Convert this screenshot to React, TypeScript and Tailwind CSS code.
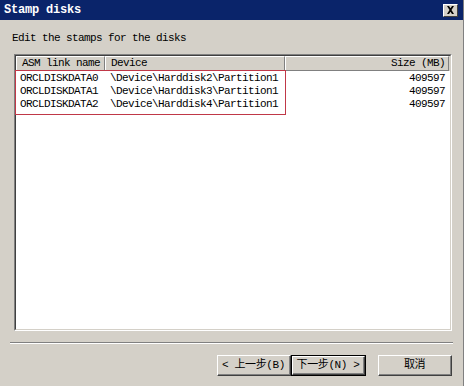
import React from "react";

const mono = { fontFamily: '"Liberation Mono", "Noto Sans CJK SC", monospace' };

const rows = [
  ["ORCLDISKDATA0", "\\Device\\Harddisk2\\Partition1", "409597"],
  ["ORCLDISKDATA1", "\\Device\\Harddisk3\\Partition1", "409597"],
  ["ORCLDISKDATA2", "\\Device\\Harddisk4\\Partition1", "409597"],
];

function Btn({ children, def }: { children: React.ReactNode; def?: boolean }) {
  return (
    <div className={def ? "border border-black" : ""}>
      <div className="border-t border-l border-t-white border-l-white border-b border-r border-b-[#404040] border-r-[#404040]">
        <div
          className={`border-b border-r border-b-[#808080] border-r-[#808080] flex items-center justify-center whitespace-nowrap text-[11px] tracking-[-0.4px] text-black ${def ? "w-[71px] h-[17px]" : "w-[72px] h-[19px]"}`}
          style={mono}
        >
          {children}
        </div>
      </div>
    </div>
  );
}

export default function App() {
  return (
    <div className="w-[464px] h-[386px] bg-[#d4d0c8] flex flex-col overflow-hidden border-r border-r-[#808080]" style={mono}>
      <div className="h-[20px] bg-[#0a246a] flex items-center justify-between pl-[4px] pr-[5px] shrink-0">
        <span className="text-white font-bold text-[12px] tracking-[-0.2px]" style={mono}>Stamp disks</span>
        <div className="w-[15px] h-[13px] bg-[#d4d0c8] border-t border-l border-white border-b border-r border-b-[#404040] border-r-[#404040] flex items-center justify-center">
          <svg width="9" height="8" viewBox="0 0 9 8">
            <path d="M1 0h2l1.5 2.2L6 0h2L5.5 4 8 8H6L4.5 5.8 3 8H1l2.5-4z" fill="#000" />
          </svg>
        </div>
      </div>
      <div className="pl-[12px] mt-[12px] text-[11px] leading-[13px] tracking-[-0.6px] text-black">
        Edit the stamps for the disks
      </div>
      <div className="relative ml-[14px] mt-[9px] w-[438px] h-[277px] border-t border-l border-t-[#808080] border-l-[#808080] border-b border-r border-b-white border-r-white">
        <div className="w-full h-full border-t border-l border-t-[#404040] border-l-[#404040] border-b border-r border-b-[#d4d0c8] border-r-[#d4d0c8] bg-white flex flex-col">
          <div className="flex h-[15px] text-[11px] leading-[13px] tracking-[-0.6px] text-black shrink-0">
            <div className="w-[89px] bg-[#d4d0c8] border-t border-l border-white border-b border-r border-b-[#808080] border-r-[#808080] pl-[5px]">ASM link name</div>
            <div className="w-[180px] bg-[#d4d0c8] border-t border-l border-white border-b border-r border-b-[#808080] border-r-[#808080] pl-[5px]">Device</div>
            <div className="w-[164px] bg-[#d4d0c8] border-t border-l border-white border-b border-r border-b-[#808080] border-r-[#808080] pr-[3px] text-right">Size (MB)</div>
            <div className="flex-1 bg-[#d4d0c8]" />
          </div>
          <div className="flex flex-col pt-[1px] text-[11px] tracking-[-0.6px] text-black">
            {rows.map((r) => (
              <div key={r[0]} className="flex h-[13px] leading-[13px]">
                <div className="w-[89px] pl-[4px]">{r[0]}</div>
                <div className="w-[180px] pl-[5px]">{r[1]}</div>
                <div className="w-[164px] pr-[4px] text-right">{r[2]}</div>
              </div>
            ))}
          </div>
        </div>
        <div className="absolute left-[0px] top-[15px] w-[271px] h-[45px] border-[1.5px] border-[#c03848]" />
      </div>
      <div className="mx-[10px] mt-[11px] border-t border-t-[#808080] border-b border-b-white" />
      <div className="flex mt-[11px] pl-[217px]">
        <Btn>&lt; 上一步(B)</Btn>
        <Btn def>下一步(N) &gt;</Btn>
        <div className="w-[12px]" />
        <Btn>取消</Btn>
      </div>
    </div>
  );
}
